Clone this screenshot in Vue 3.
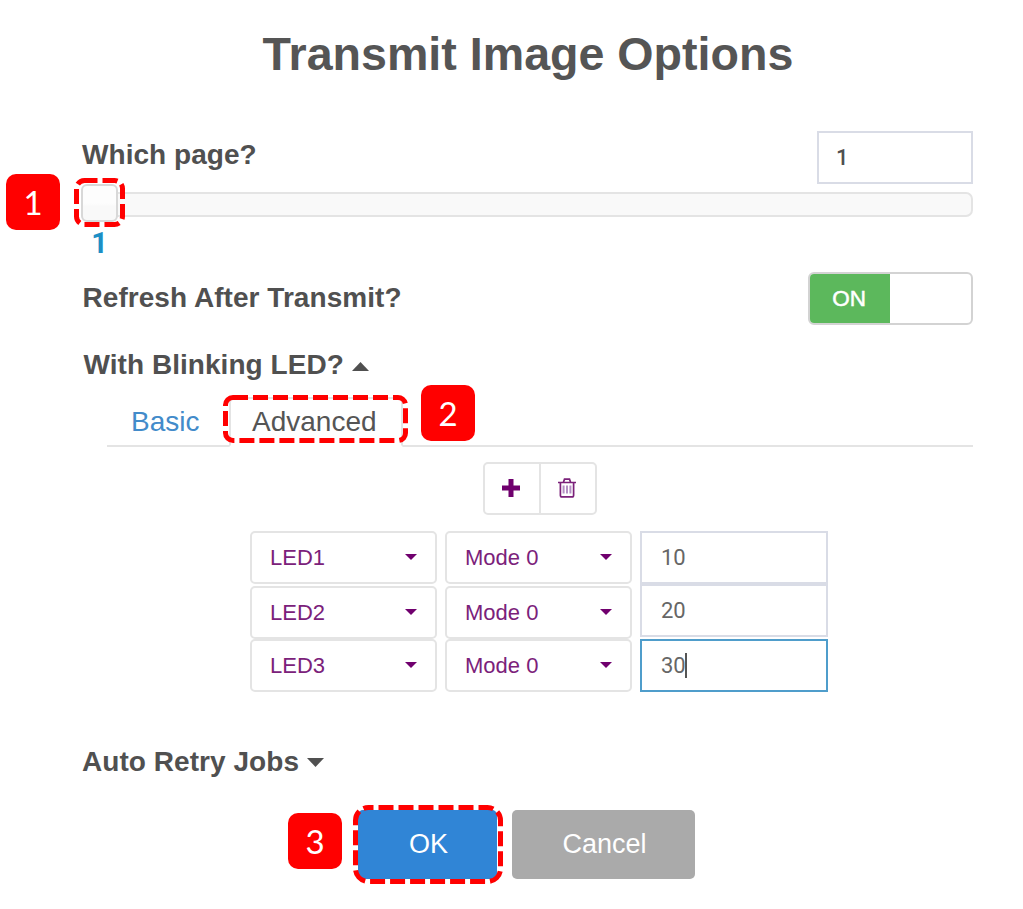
<script setup>
import { ref } from 'vue'

const page = ref(1)
const rows = ref([
  { led: 'LED1', mode: 'Mode 0', value: 10 },
  { led: 'LED2', mode: 'Mode 0', value: 20 },
  { led: 'LED3', mode: 'Mode 0', value: 30, active: true },
])
</script>

<template>
  <main class="dialog">
    <h1>Transmit Image Options</h1>

    <section class="field page-field">
      <h2>Which page?</h2>
      <div class="number page-number">{{ page }}</div>
    </section>

    <div class="slider">
      <div class="handle"></div>
      <div class="tip">{{ page }}</div>
      <svg class="ring ring-slider" width="51" height="49" viewBox="0 0 51 49">
        <rect x="2.5" y="2.5" width="46" height="44" rx="8" />
      </svg>
      <div class="step step-1">1</div>
    </div>

    <section class="field refresh-field">
      <h2>Refresh After Transmit?</h2>
      <div class="toggle"><span>ON</span></div>
    </section>

    <h2 class="collapse led-title">With Blinking LED?
      <svg width="17" height="9" viewBox="0 0 17 9"><path d="M0 9 8.5 0 17 9z" /></svg>
    </h2>

    <nav class="tabs">
      <a class="tab">Basic</a>
      <a class="tab current">Advanced
        <svg class="ring ring-tab" width="185" height="48" viewBox="0 0 185 48">
          <rect x="2.5" y="2.5" width="180" height="43" rx="7.5" />
        </svg>
      </a>
      <div class="step step-2">2</div>
    </nav>

    <div class="tools">
      <div class="tool">
        <svg width="18" height="18" viewBox="0 0 18 18"><path d="M6.5 0h5v6.5H18v5h-6.5V18h-5v-6.5H0v-5h6.5z" fill="#70006e" /></svg>
      </div>
      <div class="tool">
        <svg width="18" height="20" viewBox="0 0 18 20" fill="none" stroke="#7b217a">
          <path d="M0 4.5h18M5.5 4 6.5 1.2h5l1 2.8" stroke-width="1.7" />
          <path d="M2.4 5v12.2q0 1.7 1.6 1.7h10q1.6 0 1.6-1.7V5" stroke-width="1.7" />
          <path d="M5.6 7.5v8M9 7.5v8M12.4 7.5v8" stroke="#b58fc4" stroke-width="2" />
        </svg>
      </div>
    </div>

    <div class="grid">
      <div class="column">
        <div v-for="row in rows" :key="row.led" class="select">
          {{ row.led }}
          <svg width="12" height="6" viewBox="0 0 12 6"><path d="M0 0h12L6 6z" /></svg>
        </div>
      </div>
      <div class="column">
        <div v-for="row in rows" :key="row.led" class="select">
          {{ row.mode }}
          <svg width="12" height="6" viewBox="0 0 12 6"><path d="M0 0h12L6 6z" /></svg>
        </div>
      </div>
      <div class="column inputs">
        <div v-for="row in rows" :key="row.led" class="number" :class="{ active: row.active }">
          {{ row.value }}<i v-if="row.active" class="cursor"></i>
        </div>
      </div>
    </div>

    <h2 class="collapse retry-title">Auto Retry Jobs
      <svg width="17" height="9" viewBox="0 0 17 9"><path d="M0 0h17L8.5 9z" /></svg>
    </h2>

    <footer class="actions">
      <div class="button ok">OK
        <svg class="ring ring-ok" width="150" height="79" viewBox="0 0 150 79">
          <rect x="2.5" y="2.5" width="145" height="74" rx="13" />
        </svg>
        <div class="step step-3">3</div>
      </div>
      <div class="button cancel">Cancel</div>
    </footer>
  </main>
</template>

<style>
body {
  background: #fff;
}
</style>

<style scoped>
* {
  box-sizing: border-box;
}

.dialog {
  width: 1023px;
  height: 909px;
  overflow: hidden;
  padding: 24px 50px 0 82px;
  font-family: "Liberation Sans", Arial, sans-serif;
  color: #505050;
}

h1 {
  margin: 0 0 47px -26px;
  width: 944px;
  height: 60px;
  line-height: 60px;
  text-align: center;
  font-size: 46.6px;
  font-weight: 700;
  color: #555;
}

h2 {
  margin: 0;
  font-size: 28px;
  line-height: 36px;
  font-weight: 700;
  letter-spacing: 0.05px;
  color: #505050;
  white-space: nowrap;
}

.field {
  display: flex;
  justify-content: space-between;
}

.page-field {
  height: 53px;
}

.page-field h2 {
  margin-top: 6px;
}

.number {
  height: 53px;
  padding-left: 19px;
  border: 2px solid #d9dce6;
  font-family: Roboto, "Liberation Sans", sans-serif;
  font-size: 22px;
  line-height: 50px;
  color: #666;
}

.page-number {
  width: 156px;
  padding-left: 17px;
  font-weight: 500;
  color: #505050;
}

.slider {
  position: relative;
  height: 25px;
  margin-top: 8px;
  border: 2px solid #e4e4e4;
  border-radius: 7px;
  background: #f9f9f9;
}

.handle {
  width: 37px;
  height: 38px;
  margin: -10px 0 0 -3px;
  border: 2px solid #d8d8d8;
  border-radius: 6px;
  background: linear-gradient(#fdfdfd 50%, #f9f9f9 60%);
}

.tip {
  width: 31px;
  margin-top: 5px;
  text-align: center;
  line-height: 32px;
  font-family: Roboto, "Liberation Sans", sans-serif;
  font-size: 29px;
  font-weight: 700;
  color: #1c8fc5;
}

.ring {
  position: absolute;
  overflow: visible;
}

.ring rect {
  fill: none;
  stroke: #f00;
  stroke-width: 5;
  stroke-dasharray: 15 5;
}

.ring-slider {
  left: -10px;
  top: -16px;
}

.ring-slider rect {
  stroke-dashoffset: 2;
}

.step {
  position: absolute;
  width: 54px;
  height: 56px;
  border-radius: 10px;
  background: #f00;
  color: #fff;
  text-align: center;
  font: 400 33px/57px Lato, sans-serif;
}

.step-1 {
  left: -78px;
  top: -20px;
}

.refresh-field {
  margin-top: 55px;
  height: 53px;
}

.refresh-field h2 {
  margin-top: 8px;
  padding-left: 0.5px;
}

.toggle {
  width: 165px;
  height: 53px;
  border: 2px solid #d3d3d3;
  border-radius: 6px;
  overflow: hidden;
}

.toggle span {
  display: block;
  width: 80px;
  height: 49px;
  padding-right: 2px;
  background: #5cb85c;
  color: #fff;
  text-align: center;
  font-size: 22.5px;
  line-height: 50px;
  -webkit-text-stroke: 0.5px #fff;
}

.collapse {
  display: flex;
  align-items: center;
  gap: 8px;
}

.collapse svg {
  fill: #505050;
  margin-top: 3px;
}

.led-title {
  margin: 22px 0 0 1.5px;
}

.tabs {
  position: relative;
  display: flex;
  height: 50px;
  margin: 14px 0 0 25px;
  border-bottom: 2px solid #e4e4e4;
  font-size: 28px;
  line-height: 49px;
}

.tab {
  width: 122px;
  padding-left: 24px;
  color: #428bca;
}

.tab.current {
  position: relative;
  width: 174px;
  height: 50px;
  padding-left: 21px;
  border: 2px solid #e4e4e4;
  border-bottom-color: #fff;
  border-radius: 6px 6px 0 0;
  line-height: 45px;
  color: #555;
}

.ring-tab {
  left: -8px;
  top: -4px;
}

.step-2 {
  left: 314px;
  top: -12px;
}

.tools {
  display: flex;
  width: 114px;
  height: 53px;
  margin: 15px 0 0 401px;
  border: 2px solid #e4e4e4;
  border-radius: 5px;
}

.tool {
  flex: 1;
  display: flex;
  align-items: center;
  justify-content: center;
  padding: 0 2px 1px 0;
}

.tool + .tool {
  border-left: 2px solid #e4e4e4;
}

.grid {
  display: grid;
  grid-template-columns: 187px 187px 188px;
  gap: 8px;
  margin: 16px 0 0 168px;
}

.column {
  display: flex;
  flex-direction: column;
}

.select {
  display: flex;
  align-items: center;
  justify-content: space-between;
  height: 53px;
  padding: 0 18px 0 18px;
  border: 2px solid #e4e4e4;
  border-radius: 5px;
  font-size: 22px;
  color: #7b217a;
}

.select:nth-child(2) {
  margin-top: 2px;
}

.select svg {
  fill: #70006e;
  margin-top: -1px;
}

.inputs .active {
  margin-top: 2px;
  border-color: #4f9dcb;
}

.cursor {
  display: inline-block;
  width: 2px;
  height: 25px;
  margin-left: -1px;
  vertical-align: -5px;
  background: #555;
}

.retry-title {
  margin-top: 52px;
}

.retry-title svg {
  margin-top: 1px;
}

.actions {
  display: flex;
  gap: 15px;
  margin: 30px 0 0 276px;
}

.button {
  position: relative;
  height: 69px;
  border-radius: 5px;
  color: #fff;
  text-align: center;
  font-size: 27px;
  line-height: 68px;
}

.ok {
  width: 139px;
  padding-left: 2px;
  background: #3085d6;
}

.cancel {
  width: 183px;
  padding-left: 2px;
  background: #aaa;
}

.ring-ok {
  left: -5px;
  top: -5px;
}

.ring-ok rect {
  stroke-dashoffset: 10;
}

.step-3 {
  left: -70px;
  top: 3px;
}
</style>
